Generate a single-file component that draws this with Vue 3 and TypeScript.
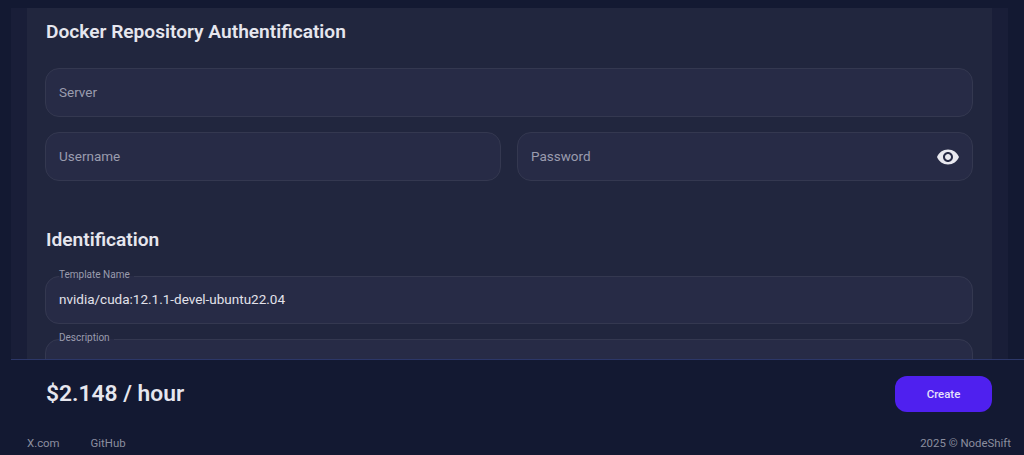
<script setup lang="ts">
interface FooterLink {
  label: string;
  href: string;
}

const links: FooterLink[] = [
  { label: 'X.com', href: '#' },
  { label: 'GitHub', href: '#' }
];
const price = '$2.148 / hour';
</script>

<template>
  <div class="page">
    <main class="scroll-area">
      <div class="outer-panel">
        <div class="card">
          <h2 class="section-title">Docker Repository Authentification</h2>
          <div class="field-stack">
            <div class="field"><span class="placeholder">Server</span></div>
            <div class="field-row">
              <div class="field"><span class="placeholder">Username</span></div>
              <div class="field">
                <span class="placeholder">Password</span>
                <svg class="eye" viewBox="0 0 24 24" width="24" height="24" aria-hidden="true">
                  <path
                    fill="currentColor"
                    d="M12 4.5C7 4.5 2.73 7.61 1 12c1.73 4.39 6 7.500 11 7.500s9.270-3.110 11-7.500c-1.730-4.390-6-7.500-11-7.500zM12 17c-2.760 0-5-2.240-5-5s2.240-5 5-5 5 2.240 5 5-2.240 5-5 5zm0-8c-1.660 0-3 1.340-3 3s1.340 3 3 3 3-1.340 3-3-1.340-3-3-3z"
                  />
                </svg>
              </div>
            </div>
          </div>

          <h2 class="section-title identification">Identification</h2>
          <div class="field-stack">
            <fieldset class="field outlined">
              <legend>Template Name</legend>
              <span class="value">nvidia/cuda:12.1.1-devel-ubuntu22.04</span>
            </fieldset>
            <fieldset class="field outlined">
              <legend>Description</legend>
            </fieldset>
          </div>
        </div>
      </div>
    </main>

    <div class="summary-bar">
      <span class="price">{{ price }}</span>
      <button class="create-btn" type="button">Create</button>
    </div>

    <footer class="footer">
      <nav class="footer-links">
        <a v-for="link in links" :key="link.label" :href="link.href">{{ link.label }}</a>
      </nav>
      <span>2025 © NodeShift</span>
    </footer>
  </div>
</template>

<style>
html,
body {
  margin: 0;
  background: #131932;
}
</style>

<style scoped>
.page {
  width: 1024px;
  height: 455px;
  display: flex;
  flex-direction: column;
  overflow: hidden;
  background: #131932;
  font-family: Roboto, 'Liberation Sans', sans-serif;
}

.scroll-area {
  height: 359px;
  flex-shrink: 0;
  overflow: hidden;
  padding: 8px 16px 0 11px;
  box-sizing: border-box;
}

.outer-panel {
  height: 100%;
  padding: 0 16px;
  background: #191e38;
}

.card {
  height: 100%;
  padding: 12px 19px 0 18px;
  box-sizing: border-box;
  background: #21263e;
}

.section-title {
  margin: 0;
  padding-left: 1px;
  font-size: 19.15px;
  line-height: 24px;
  font-weight: 600;
  color: #e6e6ee;
}

.section-title.identification {
  margin-top: 47px;
}

.field-stack {
  margin-top: 24px;
  display: flex;
  flex-direction: column;
  gap: 15px;
}

.section-title.identification + .field-stack {
  margin-top: 24px;
}

.field-row {
  display: grid;
  grid-template-columns: 1fr 1fr;
  gap: 16px;
}

.field {
  height: 49px;
  box-sizing: border-box;
  display: flex;
  align-items: center;
  justify-content: space-between;
  padding: 0 13px;
  background: #272b46;
  border: 1px solid #343850;
  border-radius: 14px;
  font-size: 13.5px;
}

.placeholder {
  padding-bottom: 2px;
  color: #9a9cae;
}

.eye {
  color: #e8e8ef;
  margin-right: -1px;
}

.outlined {
  display: block;
  margin: 0;
  min-width: 0;
  height: 54px;
  margin-top: -6px;
  padding: 0 13px;
}

.outlined legend {
  padding: 0 4px 0 0;
  margin-left: 0;
  font-size: 10px;
  line-height: 12px;
  color: #9a9cae;
  position: relative;
  top: -1px;
}

.value {
  display: block;
  line-height: 35px;
  color: #e2e2ea;
}

.summary-bar {
  margin-left: 11px;
  height: 68px;
  flex-shrink: 0;
  box-sizing: border-box;
  display: flex;
  align-items: center;
  justify-content: space-between;
  padding: 0 32px 0 35px;
  background: #131932;
  border-top: 1px solid #2c3768;
}

.price {
  font-size: 22.8px;
  font-weight: 600;
  color: #e6e6ee;
}

.create-btn {
  width: 97px;
  height: 36px;
  border: none;
  border-radius: 12px;
  background: #4f20ef;
  color: #e6e2fb;
  font-family: inherit;
  font-size: 11.4px;
  font-weight: 500;
}

.footer {
  flex: 1;
  display: flex;
  align-items: center;
  justify-content: space-between;
  padding: 3px 13px 0 27px;
  font-size: 11.4px;
  color: #8b8e9f;
}

.footer-links {
  display: flex;
  gap: 31px;
}

.footer-links a {
  color: inherit;
  text-decoration: none;
}
</style>
